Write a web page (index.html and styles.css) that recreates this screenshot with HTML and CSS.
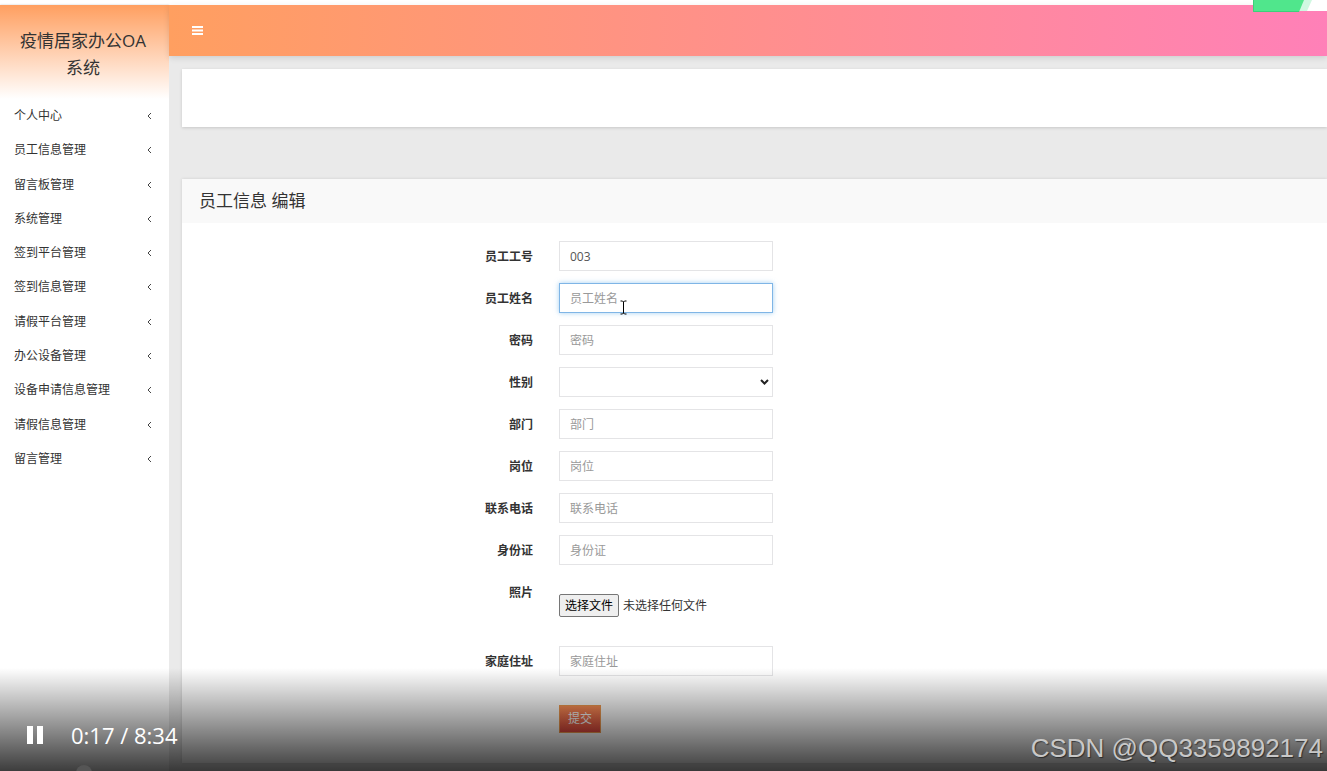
FILE: index.html
```html
<!DOCTYPE html>
<html lang="zh-CN">
<head>
<meta charset="utf-8">
<title>疫情居家办公OA系统</title>
<link rel="stylesheet" href="styles.css">
</head>
<body>
<div class="app">
  <aside class="sidebar">
    <h1 class="brand">疫情居家办公OA系统</h1>
    <nav>
      <ul class="menu">
        <li><a href="#">个人中心<svg class="chev" viewBox="0 0 5 8"><path d="M4 1 1 4l3 3"/></svg></a></li>
        <li><a href="#">员工信息管理<svg class="chev" viewBox="0 0 5 8"><path d="M4 1 1 4l3 3"/></svg></a></li>
        <li><a href="#">留言板管理<svg class="chev" viewBox="0 0 5 8"><path d="M4 1 1 4l3 3"/></svg></a></li>
        <li><a href="#">系统管理<svg class="chev" viewBox="0 0 5 8"><path d="M4 1 1 4l3 3"/></svg></a></li>
        <li><a href="#">签到平台管理<svg class="chev" viewBox="0 0 5 8"><path d="M4 1 1 4l3 3"/></svg></a></li>
        <li><a href="#">签到信息管理<svg class="chev" viewBox="0 0 5 8"><path d="M4 1 1 4l3 3"/></svg></a></li>
        <li><a href="#">请假平台管理<svg class="chev" viewBox="0 0 5 8"><path d="M4 1 1 4l3 3"/></svg></a></li>
        <li><a href="#">办公设备管理<svg class="chev" viewBox="0 0 5 8"><path d="M4 1 1 4l3 3"/></svg></a></li>
        <li><a href="#">设备申请信息管理<svg class="chev" viewBox="0 0 5 8"><path d="M4 1 1 4l3 3"/></svg></a></li>
        <li><a href="#">请假信息管理<svg class="chev" viewBox="0 0 5 8"><path d="M4 1 1 4l3 3"/></svg></a></li>
        <li><a href="#">留言管理<svg class="chev" viewBox="0 0 5 8"><path d="M4 1 1 4l3 3"/></svg></a></li>
      </ul>
    </nav>
  </aside>
  <div class="main">
    <header class="topbar">
      <button class="toggle" type="button" aria-label="菜单"><svg viewBox="0 0 11 9"><path d="M0 1h11M0 4.5h11M0 8h11"/></svg></button>
    </header>
    <main class="content">
      <div class="crumbs"></div>
      <section class="panel">
        <h2 class="panel-title">员工信息 编辑</h2>
        <form class="form">
          <div class="row"><label for="no">员工工号</label><input class="field" id="no" type="text" value="003"></div>
          <div class="row"><label for="name">员工姓名</label><input class="field active" id="name" type="text" placeholder="员工姓名"></div>
          <div class="row"><label for="pwd">密码</label><input class="field" id="pwd" type="password" placeholder="密码"></div>
          <div class="row"><label for="sex">性别</label>
            <div class="select-wrap"><select class="field" id="sex"><option></option><option>男</option><option>女</option></select><svg class="arrow" viewBox="0 0 9 6"><path d="M1 1l3.500 3.500L8 1"/></svg></div></div>
          <div class="row"><label for="dept">部门</label><input class="field" id="dept" type="text" placeholder="部门"></div>
          <div class="row"><label for="post">岗位</label><input class="field" id="post" type="text" placeholder="岗位"></div>
          <div class="row"><label for="tel">联系电话</label><input class="field" id="tel" type="text" placeholder="联系电话"></div>
          <div class="row"><label for="card">身份证</label><input class="field" id="card" type="text" placeholder="身份证"></div>
          <div class="row photo"><label for="photo">照片</label>
            <div class="file"><input class="file-input" id="photo" type="file"><label class="file-button" for="photo">选择文件</label><span>未选择任何文件</span></div></div>
          <div class="row"><label for="addr">家庭住址</label><input class="field" id="addr" type="text" placeholder="家庭住址"></div>
          <div class="row actions"><button class="submit" type="submit">提交</button></div>
        </form>
      </section>
    </main>
  </div>
</div>
<svg class="badge" viewBox="0 0 74 12"><path fill="#fff" d="M0 0h74v11H0z"/><path fill="#cff8e1" d="M50 0h9l-5 11h-8z"/><path fill="#50e68c" d="M0 0h51l-5 12H0z"/><path fill="none" stroke="#3ccf7b" d="M.5 0v11.500H46"/></svg>
<svg class="cursor" viewBox="0 0 7 15"><path d="M.5 1h2l1 1 1-1h2M3.500 2v11M.5 14h2l1-1 1 1h2"/></svg>
<div class="player">
  <button class="pause" type="button" aria-label="暂停"><svg viewBox="0 0 16 18"><path d="M0 0h6v18H0zM10 0h6v18h-6z"/></svg></button>
  <span class="time">0:17 / 8:34</span>
  <span class="watermark">CSDN @QQ3359892174</span>
  <span class="knob"></span>
</div>
</body>
</html>
```
FILE: styles.css
```css
* { box-sizing: border-box; }

body {
  margin: 0;
  height: 100vh;
  overflow: hidden;
  position: relative;
  background: #fff;
  color: #333;
  font: 12px/18px "Open Sans", "Noto Sans CJK SC", sans-serif;
}

button, input, select { font: inherit; color: inherit; }

.app {
  display: flex;
  height: 100%;
  padding-top: 5px;
}

.sidebar {
  flex: 0 0 169px;
  background: #fff;
  box-shadow: 0 0 2px rgba(0, 0, 0, .2);
}

.brand {
  margin: 0;
  padding: 22px 17px 18px 14px;
  background: linear-gradient(#ff9f60, #fff);
  text-align: center;
  font-size: 17px;
  font-weight: 400;
  line-height: 27px;
  word-break: break-all;
}

.menu {
  display: grid;
  grid-auto-rows: 1fr;
  min-height: 377px;
  margin: 0;
  padding: 0 17px 0 14px;
  list-style: none;
}

.menu a {
  display: flex;
  align-items: center;
  justify-content: space-between;
  height: 100%;
  color: #333;
  text-decoration: none;
}

.chev { width: 5px; height: 8px; fill: none; stroke: #444; }

.main {
  flex: 1;
  min-width: 0;
  display: flex;
  flex-direction: column;
  background: #eaeaea;
}

.topbar {
  display: flex;
  align-items: center;
  height: 51px;
  padding-left: 23px;
  background: linear-gradient(90deg, #ff9f60, #ff80b8);
  box-shadow: 0 2px 6px rgba(0, 0, 0, .12);
}

.toggle {
  padding: 0;
  border: 0;
  background: none;
  line-height: 0;
}

.toggle svg { width: 11px; height: 9px; stroke: #fff; stroke-width: 2; }

.content {
  flex: 1;
  display: flex;
  flex-direction: column;
  gap: 52px;
  padding: 13px 0 8px 13px;
}

.crumbs {
  height: 58px;
  background: #fff;
  box-shadow: 0 1px 3px rgba(0, 0, 0, .15);
}

.panel {
  flex: 1;
  background: #fff;
  box-shadow: 0 0 3px rgba(0, 0, 0, .12);
}

.panel-title {
  margin: 0;
  padding: 8px 17px;
  background: #f9f9f9;
  font-size: 17px;
  font-weight: 400;
  line-height: 28px;
}

.form {
  display: flex;
  flex-direction: column;
  gap: 12px;
  padding-top: 18px;
}

.row {
  display: grid;
  grid-template-columns: 351fr 214fr 528fr;
  column-gap: 26px;
  align-items: start;
}

.row > label {
  padding-top: 7px;
  text-align: right;
  font-weight: 700;
}

.field {
  width: 100%;
  height: 30px;
  padding: 6px 10px;
  border: 1px solid #e4e4e6;
  border-radius: 0;
  outline: 0;
  background: #fff;
  color: #555;
}

.field::placeholder { color: #999; opacity: 1; }

.active {
  border-color: #7fb5e6;
  box-shadow: 0 0 5px rgba(102, 175, 233, .6);
}

.select-wrap { position: relative; }
.select-wrap .field { display: block; appearance: none; }

.arrow {
  position: absolute;
  right: 4px;
  top: 12px;
  width: 9px;
  height: 6px;
  fill: none;
  stroke: #222;
  stroke-width: 2;
  pointer-events: none;
}

.photo { min-height: 57px; }

.file {
  display: flex;
  align-items: center;
  gap: 4px;
  padding-top: 17px;
  white-space: nowrap;
}

.file-input { position: absolute; width: 1px; height: 1px; opacity: 0; }

.file-button {
  padding: 2px 5px 1px;
  border: 1px solid #767676;
  border-radius: 2px;
  background: #efefef;
  color: #000;
}

.actions { padding-top: 17px; }

.submit {
  grid-column: 2;
  justify-self: start;
  height: 28px;
  padding: 0 8px;
  border: 1px solid #f09a50;
  background: linear-gradient(#ff9257, #e0483e);
  color: #fff;
}

.badge {
  position: absolute;
  top: 0;
  right: 0;
  width: 74px;
  height: 12px;
  z-index: 2;
}

.cursor {
  position: absolute;
  left: 620px;
  top: 300px;
  width: 7px;
  height: 15px;
  fill: none;
  stroke: #000;
}

.player {
  position: absolute;
  inset: auto 0 0;
  z-index: 3;
  display: flex;
  align-items: center;
  height: 103px;
  padding: 30px 4px 0 27px;
  overflow: hidden;
  background: linear-gradient(transparent, rgba(0, 0, 0, .76));
  color: #fff;
}

.pause { padding: 0; border: 0; background: none; line-height: 0; }
.pause svg { width: 16px; height: 18px; fill: #fff; }

.time { margin-left: 28px; font-size: 22px; font-weight: 500; line-height: 30px; }

.watermark {
  margin-left: auto;
  padding-top: 26px;
  color: #c8c8c8;
  font: 26px/30px "Liberation Sans", sans-serif;
  text-shadow: 1px 1px 1px rgba(0, 0, 0, .5);
}

.knob {
  position: absolute;
  left: 76px;
  bottom: -10px;
  width: 16px;
  height: 16px;
  border-radius: 50%;
  background: #555;
}
```
